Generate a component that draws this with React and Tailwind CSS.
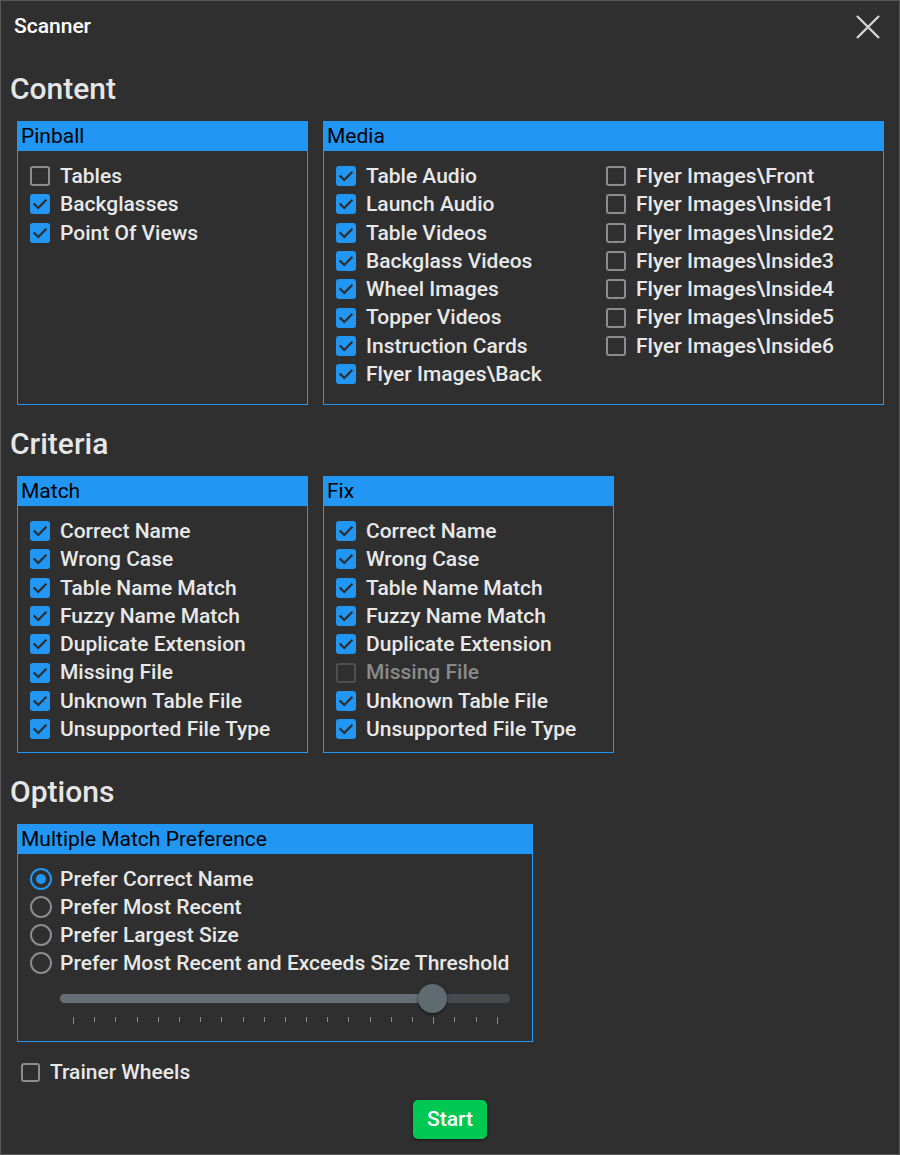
import React from 'react'

const BLUE = 'bg-[#2196f3]'

function CheckMark() {
  return (
    <svg width="20" height="20" viewBox="0 0 20 20" fill="none">
      <path d="M4.5 10.2 L8.3 14 L15.6 6.6" stroke="#2d2d2d" strokeWidth="2.2" strokeLinecap="square" />
    </svg>
  )
}

function Check({ label, checked, disabled }) {
  return (
    <div className="flex items-center h-[28.3px]">
      <span
        className={`w-5 h-5 rounded-[3px] flex items-center justify-center flex-shrink-0 ${
          checked ? BLUE : disabled ? 'border-2 border-[#505050]' : 'border-2 border-[#8c8c8c]'
        }`}
      >
        {checked && <CheckMark />}
      </span>
      <span className={`ml-[10px] pt-px text-[21px] font-medium whitespace-nowrap ${disabled ? 'text-[#8a8a8a]' : 'text-[#e8e8e8]'}`}>
        {label}
      </span>
    </div>
  )
}

function Radio({ label, selected }) {
  return (
    <div className="flex items-center h-7">
      <span
        className={`w-[22px] h-[22px] rounded-full border-2 flex items-center justify-center flex-shrink-0 ${
          selected ? 'border-[#2196f3]' : 'border-[#8c8c8c]'
        }`}
      >
        {selected && <span className="w-[10px] h-[10px] rounded-full bg-[#2196f3]" />}
      </span>
      <span className="ml-2 pt-px text-[21px] font-medium text-[#e8e8e8] whitespace-nowrap">{label}</span>
    </div>
  )
}

function Group({ title, className, children }) {
  return (
    <div className={`border border-[#2196f3] flex flex-col ${className}`}>
      <div className="h-[29px] bg-[#2196f3] text-black text-[21px] pl-[3px] flex items-center">{title}</div>
      <div className="pl-3 pt-[11px]">{children}</div>
    </div>
  )
}

function Heading({ children, className }) {
  return (
    <div className={`h-10 pl-[9px] text-[30px] leading-10 font-medium text-[#e6e6e6] ${className}`}>{children}</div>
  )
}

const MATCH = [
  'Correct Name', 'Wrong Case', 'Table Name Match', 'Fuzzy Name Match',
  'Duplicate Extension', 'Missing File', 'Unknown Table File', 'Unsupported File Type',
]

const MEDIA_LEFT = [
  'Table Audio', 'Launch Audio', 'Table Videos', 'Backglass Videos',
  'Wheel Images', 'Topper Videos', 'Instruction Cards', 'Flyer Images\\Back',
]

const MEDIA_RIGHT = [
  'Flyer Images\\Front', 'Flyer Images\\Inside1', 'Flyer Images\\Inside2', 'Flyer Images\\Inside3',
  'Flyer Images\\Inside4', 'Flyer Images\\Inside5', 'Flyer Images\\Inside6',
]

export default function App() {
  const ticks = Array.from({ length: 21 }, (_, i) => i)
  return (
    <div className="w-[900px] h-[1155px] bg-[#2f2f2f] border border-[#575757] flex flex-col font-['Roboto',sans-serif]">
      {/* Title bar */}
      <div className="h-[51px] flex items-center justify-between pl-[13px] pr-[18px]">
        <span className="text-[21px] font-medium text-white">Scanner</span>
        <svg width="26" height="26" viewBox="0 0 26 26" fill="none">
          <path d="M2 2 L24 24 M24 2 L2 24" stroke="#d4d4d4" strokeWidth="2.4" />
        </svg>
      </div>

      <Heading className="mt-[17px]">Content</Heading>
      <div className="mt-3 ml-4 flex gap-[15px]">
        <Group title="Pinball" className="w-[291px] h-[284px]">
          <Check label="Tables" />
          <Check label="Backglasses" checked />
          <Check label="Point Of Views" checked />
        </Group>
        <Group title="Media" className="w-[561px] h-[284px]">
          <div className="grid grid-cols-[271px_1fr]">
            <div>
              {MEDIA_LEFT.map(l => <Check key={l} label={l} checked />)}
            </div>
            <div className="-ml-px">
              {MEDIA_RIGHT.map(l => <Check key={l} label={l} />)}
            </div>
          </div>
        </Group>
      </div>

      <Heading className="mt-[19px]">Criteria</Heading>
      <div className="mt-3 ml-4 flex gap-[15px]">
        <Group title="Match" className="w-[291px] h-[277px]">
          {MATCH.map(l => <Check key={l} label={l} checked />)}
        </Group>
        <Group title="Fix" className="w-[291px] h-[277px]">
          {MATCH.map(l => (
            <Check key={l} label={l} checked={l !== 'Missing File'} disabled={l === 'Missing File'} />
          ))}
        </Group>
      </div>

      <Heading className="mt-[19px]">Options</Heading>
      <div className="mt-3 ml-4 flex">
        <Group title="Multiple Match Preference" className="w-[516px] h-[218px]">
          <Radio label="Prefer Correct Name" selected />
          <Radio label="Prefer Most Recent" />
          <Radio label="Prefer Largest Size" />
          <Radio label="Prefer Most Recent and Exceeds Size Threshold" />
          <div className="ml-[30px] mt-[17px] w-[450px]">
            <div className="relative h-[9px] rounded-full bg-[#464b4f]">
              <div className="h-[9px] w-[372px] rounded-full bg-[#636e75]" />
              <div className="absolute left-[358px] top-[-10px] w-[29px] h-[29px] rounded-full bg-[#5f6a71] shadow-[0_1px_3px_rgba(0,0,0,0.6)]" />
            </div>
            <div className="ml-[13px] mt-[14px] w-[425px] flex justify-between items-start">
              {ticks.map(i => (
                <span
                  key={i}
                  className={`w-px bg-[#8a8a8a] ${i === 0 || i === 17 || i === 20 ? 'h-[7px]' : 'h-[5px]'}`}
                />
              ))}
            </div>
          </div>
        </Group>
      </div>

      <div className="mt-4 ml-5 flex items-center h-7">
        <span className="w-[19px] h-[19px] rounded-[3px] border-2 border-[#8c8c8c]" />
        <span className="ml-[10px] pt-px text-[21px] font-medium text-[#e8e8e8]">Trainer Wheels</span>
      </div>

      <button className="mt-[14px] mx-auto w-[74px] h-[39px] rounded-[5px] bg-[#00c853] text-white text-[21px] font-medium shadow-[0_1px_3px_rgba(0,0,0,0.5)]">
        Start
      </button>
    </div>
  )
}
